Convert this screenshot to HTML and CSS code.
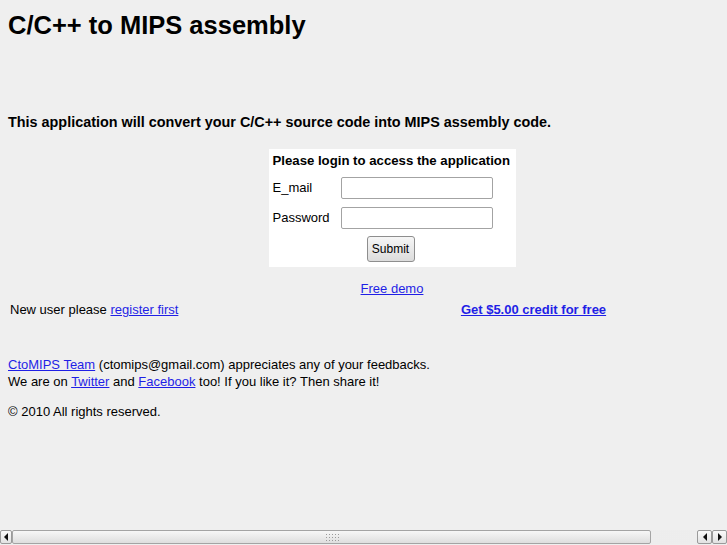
FILE: index.html
```html
<!DOCTYPE html>
<html>
<head>
<meta charset="utf-8">
<title>C/C++ to MIPS assembly</title>
<link rel="stylesheet" href="styles.css">
</head>
<body>
<div class="page">
  <h1 class="title">C/C++ to MIPS assembly</h1>
  <h2 class="intro">This application will convert your C/C++ source code into MIPS assembly code.</h2>

  <form class="login">
    <div class="login-title">Please login to access the application</div>
    <div class="field">
      <label class="label">E_mail</label>
      <input class="input" type="text">
    </div>
    <div class="field">
      <label class="label">Password</label>
      <input class="input" type="password">
    </div>
    <div class="actions">
      <button class="submit" type="button">Submit</button>
    </div>
  </form>

  <div class="demo"><a href="#">Free demo</a></div>

  <div class="row">
    <div class="newuser">New user please <a href="#">register first</a></div>
    <div class="credit"><a href="#">Get $5.00 credit for free</a></div>
  </div>

  <div class="footer">
    <p class="feedback"><a href="#">CtoMIPS Team</a> (ctomips@gmail.com) appreciates any of your feedbacks.<br>We are on <a href="#">Twitter</a> and <a href="#">Facebook</a> too! If you like it? Then share it!</p>
    <p class="copy">© 2010 All rights reserved.</p>
  </div>
</div>

<div class="hscroll">
  <div class="sb-btn sb-left"><span class="tri-l"></span></div>
  <div class="sb-thumb"><span class="grip"></span></div>
  <div class="sb-track"></div>
  <div class="sb-btn"><span class="tri-l"></span></div>
  <div class="sb-btn"><span class="tri-r"></span></div>
</div>
</body>
</html>
```

FILE: styles.css
```css
html, body {
  margin: 0;
  padding: 0;
  background: #efefef;
  overflow: hidden;
}
body {
  font-family: "Liberation Sans", Arial, sans-serif;
  font-size: 13px;
  color: #000;
  height: 545px;
}
a {
  color: #1f1fe6;
  text-decoration: underline;
}
.page {
  width: 768px;
  padding: 8px;
}
.title {
  font-size: 25.5px;
  line-height: 30px;
  font-weight: bold;
  margin: 2px 0 0;
}
.intro {
  font-size: 14.4px;
  line-height: 20px;
  font-weight: bold;
  margin: 72px 0 0;
}
.login {
  width: 239px;
  margin: 17px auto 0;
  background: #fff;
  padding: 4px 4px 5px;
}
.login-title {
  font-weight: bold;
  font-size: 13.2px;
  line-height: 16px;
  margin-bottom: 8px;
}
.field {
  display: flex;
  align-items: center;
  margin-bottom: 8px;
}
.label {
  width: 68px;
  position: relative;
  top: -1px;
}
.input {
  width: 152px;
  height: 22px;
  box-sizing: border-box;
  border: 1px solid #a3a3a3;
  border-radius: 2px;
  background: #fff;
  margin: 0;
  padding: 0 3px;
}
.actions {
  display: flex;
  justify-content: center;
  margin-top: -1px;
}
.submit {
  width: 48px;
  height: 26px;
  box-sizing: border-box;
  font-family: "Liberation Sans", Arial, sans-serif;
  font-size: 12px;
  color: #000;
  border: 1px solid #8e8e8e;
  border-radius: 3px;
  background: linear-gradient(#f6f6f6, #dcdcdc);
  padding: 0;
  margin-left: -3px;
}
.demo {
  text-align: center;
  line-height: 16px;
  margin-top: 14px;
}
.row {
  display: grid;
  grid-template-columns: 283px 1fr;
  line-height: 16px;
  margin-top: 5px;
}
.newuser {
  padding-left: 2px;
}
.credit {
  text-align: center;
  font-weight: bold;
}
.footer {
  margin-top: 38px;
}
.feedback {
  margin: 0;
  line-height: 17px;
}
.copy {
  margin: 13px 0 0;
  line-height: 17px;
}
.hscroll {
  position: fixed;
  left: 0;
  bottom: 0;
  width: 727px;
  height: 15px;
  display: flex;
  background: #efefef;
}
.sb-btn {
  width: 15px;
  height: 14px;
  box-sizing: border-box;
  border: 1px solid #9a9a9a;
  border-radius: 2px;
  background: linear-gradient(#fafafa, #e2e2e2);
  display: flex;
  align-items: center;
  justify-content: center;
}
.sb-left {
  width: 12px;
}
.tri-l {
  width: 0;
  height: 0;
  border-top: 4px solid transparent;
  border-bottom: 4px solid transparent;
  border-right: 4px solid #111;
}
.tri-r {
  width: 0;
  height: 0;
  border-top: 4px solid transparent;
  border-bottom: 4px solid transparent;
  border-left: 4px solid #111;
}
.sb-thumb {
  width: 639px;
  height: 14px;
  box-sizing: border-box;
  border: 1px solid #a4a4a4;
  border-radius: 2px;
  background: linear-gradient(#f7f7f7, #dedede);
  display: flex;
  align-items: center;
  justify-content: center;
}
.grip {
  width: 14px;
  height: 8px;
  background-image: radial-gradient(circle, #9a9a9a 0.8px, transparent 1px);
  background-size: 3px 3px;
}
.sb-track {
  flex: 1;
  height: 14px;
  background-image: radial-gradient(circle, #e2e2e2 0.6px, #f7f7f7 0.8px);
  background-size: 2px 2px;
}
```
